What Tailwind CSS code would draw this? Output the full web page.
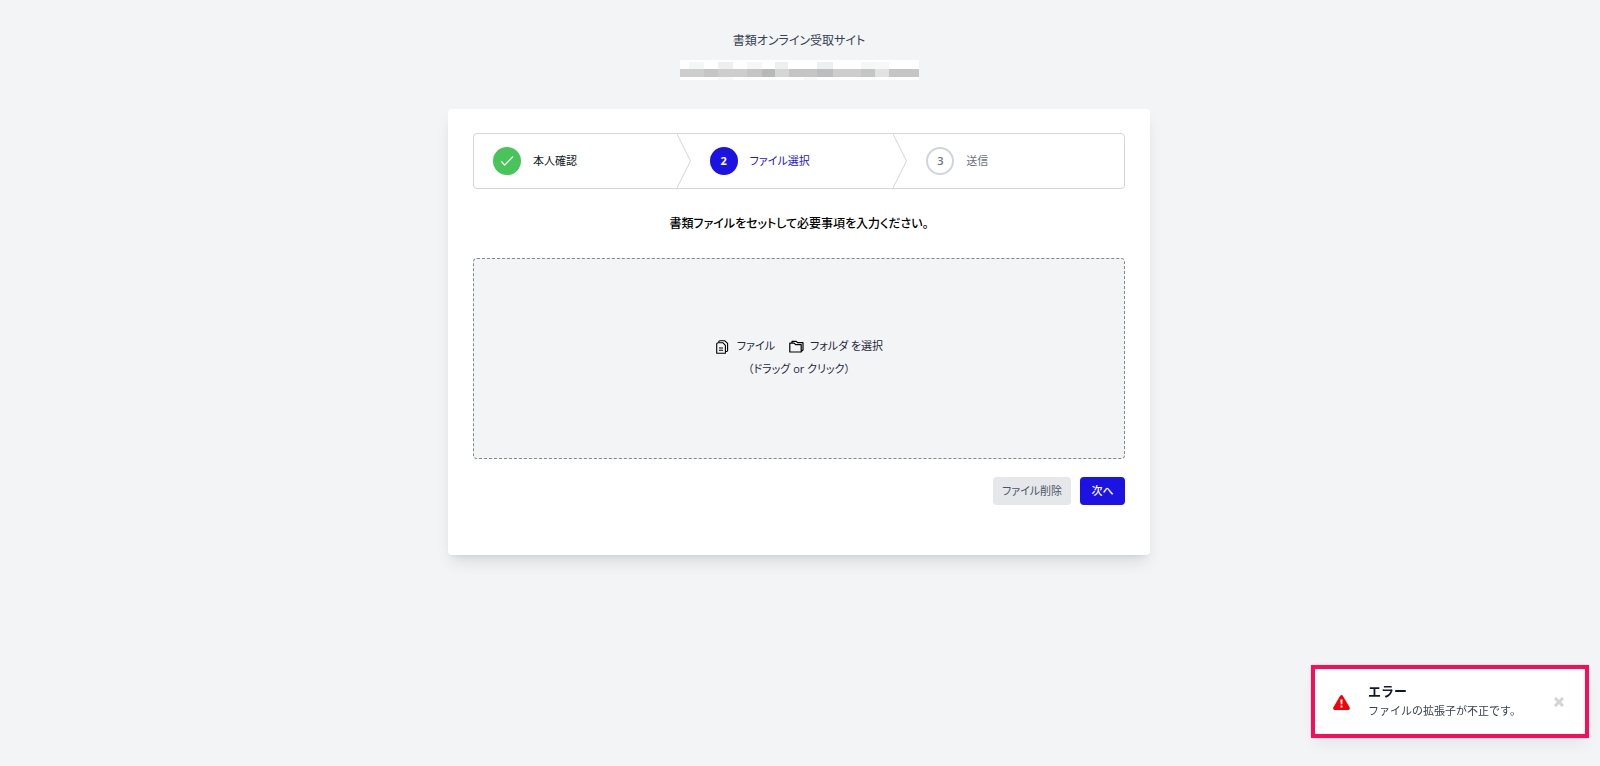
<!DOCTYPE html>
<html lang="ja">
<head>
<meta charset="utf-8">
<meta name="viewport" content="width=device-width, initial-scale=1">
<title>書類オンライン受取サイト</title>
<script src="https://cdn.jsdelivr.net/npm/@tailwindcss/browser@4"></script>
</head>
<body class="min-h-screen bg-[#f2f4f6] pt-8 pr-[18px] pb-12 pl-4 font-['Open_Sans','Noto_Sans_CJK_JP',sans-serif] text-[11px] text-gray-700 [font-feature-settings:'palt']">
<header class="flex flex-col items-center gap-[11px]">
  <h1 class="text-[12px] leading-[17px] text-gray-700">書類オンライン受取サイト</h1>
  <svg class="h-5 w-[239px]" viewBox="0 0 239 20" shape-rendering="crispEdges" aria-hidden="true">
    <path fill="#fff" d="M0 0h239v20H0z"/>
    <path fill="#f5f7f7" d="M9 2h15v7H9zM67 2h15v7H67zM181 2h14v7h-14z"/>
    <path fill="#eef0f0" d="M38 2h15v7H38zM95 2h13v7H95zM137 2h16v7h-16z"/>
    <path fill="#f8f8f8" d="M38 17h15v3H38zM124 17h13v3h-13zM195 2h14v7h-14z"/>
    <path fill="#cdcdce" d="M0 9h239v8H0z"/>
    <path fill="#c5c5c6" d="M24 9h14v8H24zM67 9h15v8H67zM109 9h28v8h-28zM181 9h14v8h-14zM209 9h30v8h-30z"/>
    <path fill="#b8b8b9" d="M82 9h13v8H82z"/>
    <path fill="#bdbdbf" d="M137 9h16v8h-16z"/>
    <path fill="#d4d5d6" d="M95 9h14v8H95z"/>
    <path fill="#e0e3e2" d="M195 9h14v8h-14z"/>
  </svg>
</header>

<main class="mx-auto mt-[29px] max-w-[702px] rounded bg-white px-[25px] pt-6 pb-[50px] shadow-lg">
  <nav aria-label="進行状況">
    <ol class="grid grid-cols-3 rounded border border-gray-300">
      <li class="flex h-[54px] items-center">
        <div class="flex flex-1 items-center gap-3 pl-[19px]">
          <span class="grid size-7 place-items-center rounded-full bg-[#48c45a]">
            <svg class="size-4" viewBox="0 0 16 16" fill="none" stroke="#fff" stroke-width="1.200" stroke-linecap="round" stroke-linejoin="round" aria-hidden="true"><path d="M2.500 8.500l3.200 3.700L13.600 4"/></svg>
          </span>
          <span class="text-gray-900">本人確認</span>
        </div>
        <svg class="h-[54px] w-[14px] text-gray-300" viewBox="0 0 14 54" fill="none" stroke="currentColor" aria-hidden="true"><path d="M0 0l13.500 27L0 54"/></svg>
      </li>
      <li class="flex h-[54px] items-center" aria-current="step">
        <div class="flex flex-1 items-center gap-3 pl-[19px]">
          <span class="grid size-7 place-items-center rounded-full bg-[#1b12e3] font-bold text-white">2</span>
          <span class="text-[#1b12e3]">ファイル選択</span>
        </div>
        <svg class="h-[54px] w-[14px] text-gray-300" viewBox="0 0 14 54" fill="none" stroke="currentColor" aria-hidden="true"><path d="M0 0l13.500 27L0 54"/></svg>
      </li>
      <li class="flex h-[54px] items-center gap-3 pl-[19px]">
        <span class="grid size-7 place-items-center rounded-full border-2 border-gray-300 font-semibold text-gray-500">3</span>
        <span class="text-gray-500">送信</span>
      </li>
    </ol>
  </nav>

  <h2 class="mt-[25px] text-center text-[12px] leading-5 font-medium text-black">書類ファイルをセットして必要事項を入力ください。</h2>

  <form>
    <label for="files" class="mt-6 flex h-[201px] cursor-pointer flex-col items-center justify-center rounded border border-dashed border-[#85888e] bg-[#f2f4f6] pb-1 text-[11px] leading-[23px] text-gray-800">
      <span class="flex items-center">
        <svg class="mt-[3px] mr-2 size-[14px] text-black" viewBox="0 0 14 14" fill="none" stroke="currentColor" stroke-width="1.100" stroke-linejoin="round" aria-hidden="true"><path d="M3.200 2.800H8L10.400 5.300V13.200H1.700V3.800Q1.700 2.800 3.200 2.800z"/><path d="M3.800 2.600V1.800Q3.800.8 4.800.8H9.800L12.600 3.400V10.600Q12.600 11.500 11.700 11.500H10.400"/><path d="M4 8h4M4 10.300h4"/></svg>
        ファイル
        <svg class="mt-[3px] mr-[6px] ml-[14px] h-[13px] w-[15px] text-black" viewBox="0 0 15 13" fill="none" stroke="currentColor" stroke-width="1.200" stroke-linejoin="round" aria-hidden="true"><path d="M.8 3.200V12H12.200V4.700H6.600L5.200 3.200z"/><path d="M3 3V1.300H7.200L8.500 2.700H14V9.900L12.300 11.500"/></svg>
        フォルダ を選択
      </span>
      <span>（ドラッグ or クリック）</span>
    </label>
    <input id="files" type="file" multiple class="sr-only">
    <div class="mt-[18px] flex justify-end gap-[9px]">
      <button type="button" class="h-7 w-[78px] rounded bg-gray-200 text-gray-600">ファイル削除</button>
      <button type="submit" class="h-7 w-[45px] rounded bg-[#1b12e3] font-medium text-white">次へ</button>
    </div>
  </form>
</main>

<div role="alert" class="fixed right-[11px] bottom-7 flex h-[73px] w-[278px] items-center border-4 border-[#ff0a54] bg-white pr-[21px] pl-[18px] shadow-lg shadow-black/5 [font-feature-settings:normal]">
  <svg class="mt-[2px] h-[15px] w-[17px] shrink-0" viewBox="0 0 17 15" aria-hidden="true"><path fill="#f90006" d="M7.200.8Q8.500-.7 9.800.8L16.700 12.600Q17.200 14.600 15.400 15H1.600Q-.2 14.600.3 12.600z"/><path fill="#fff" d="M7.400 4.600h2.200L9.300 9.300H7.700zM7.500 10.400h2v2h-2z"/></svg>
  <div class="ml-[18px] flex-1 pb-[2px]">
    <p class="text-[13px] leading-5 font-bold text-gray-900">エラー</p>
    <p class="leading-5 text-gray-700">ファイルの拡張子が不正です。</p>
  </div>
  <button type="button" aria-label="閉じる" class="grid size-[10px] place-items-center text-[#d3d4d6]">
    <svg class="size-[10px]" viewBox="0 0 10 10" fill="none" stroke="currentColor" stroke-width="3" aria-hidden="true"><path d="M1 1l8 8M9 1L1 9"/></svg>
  </button>
</div>
</body>
</html>
